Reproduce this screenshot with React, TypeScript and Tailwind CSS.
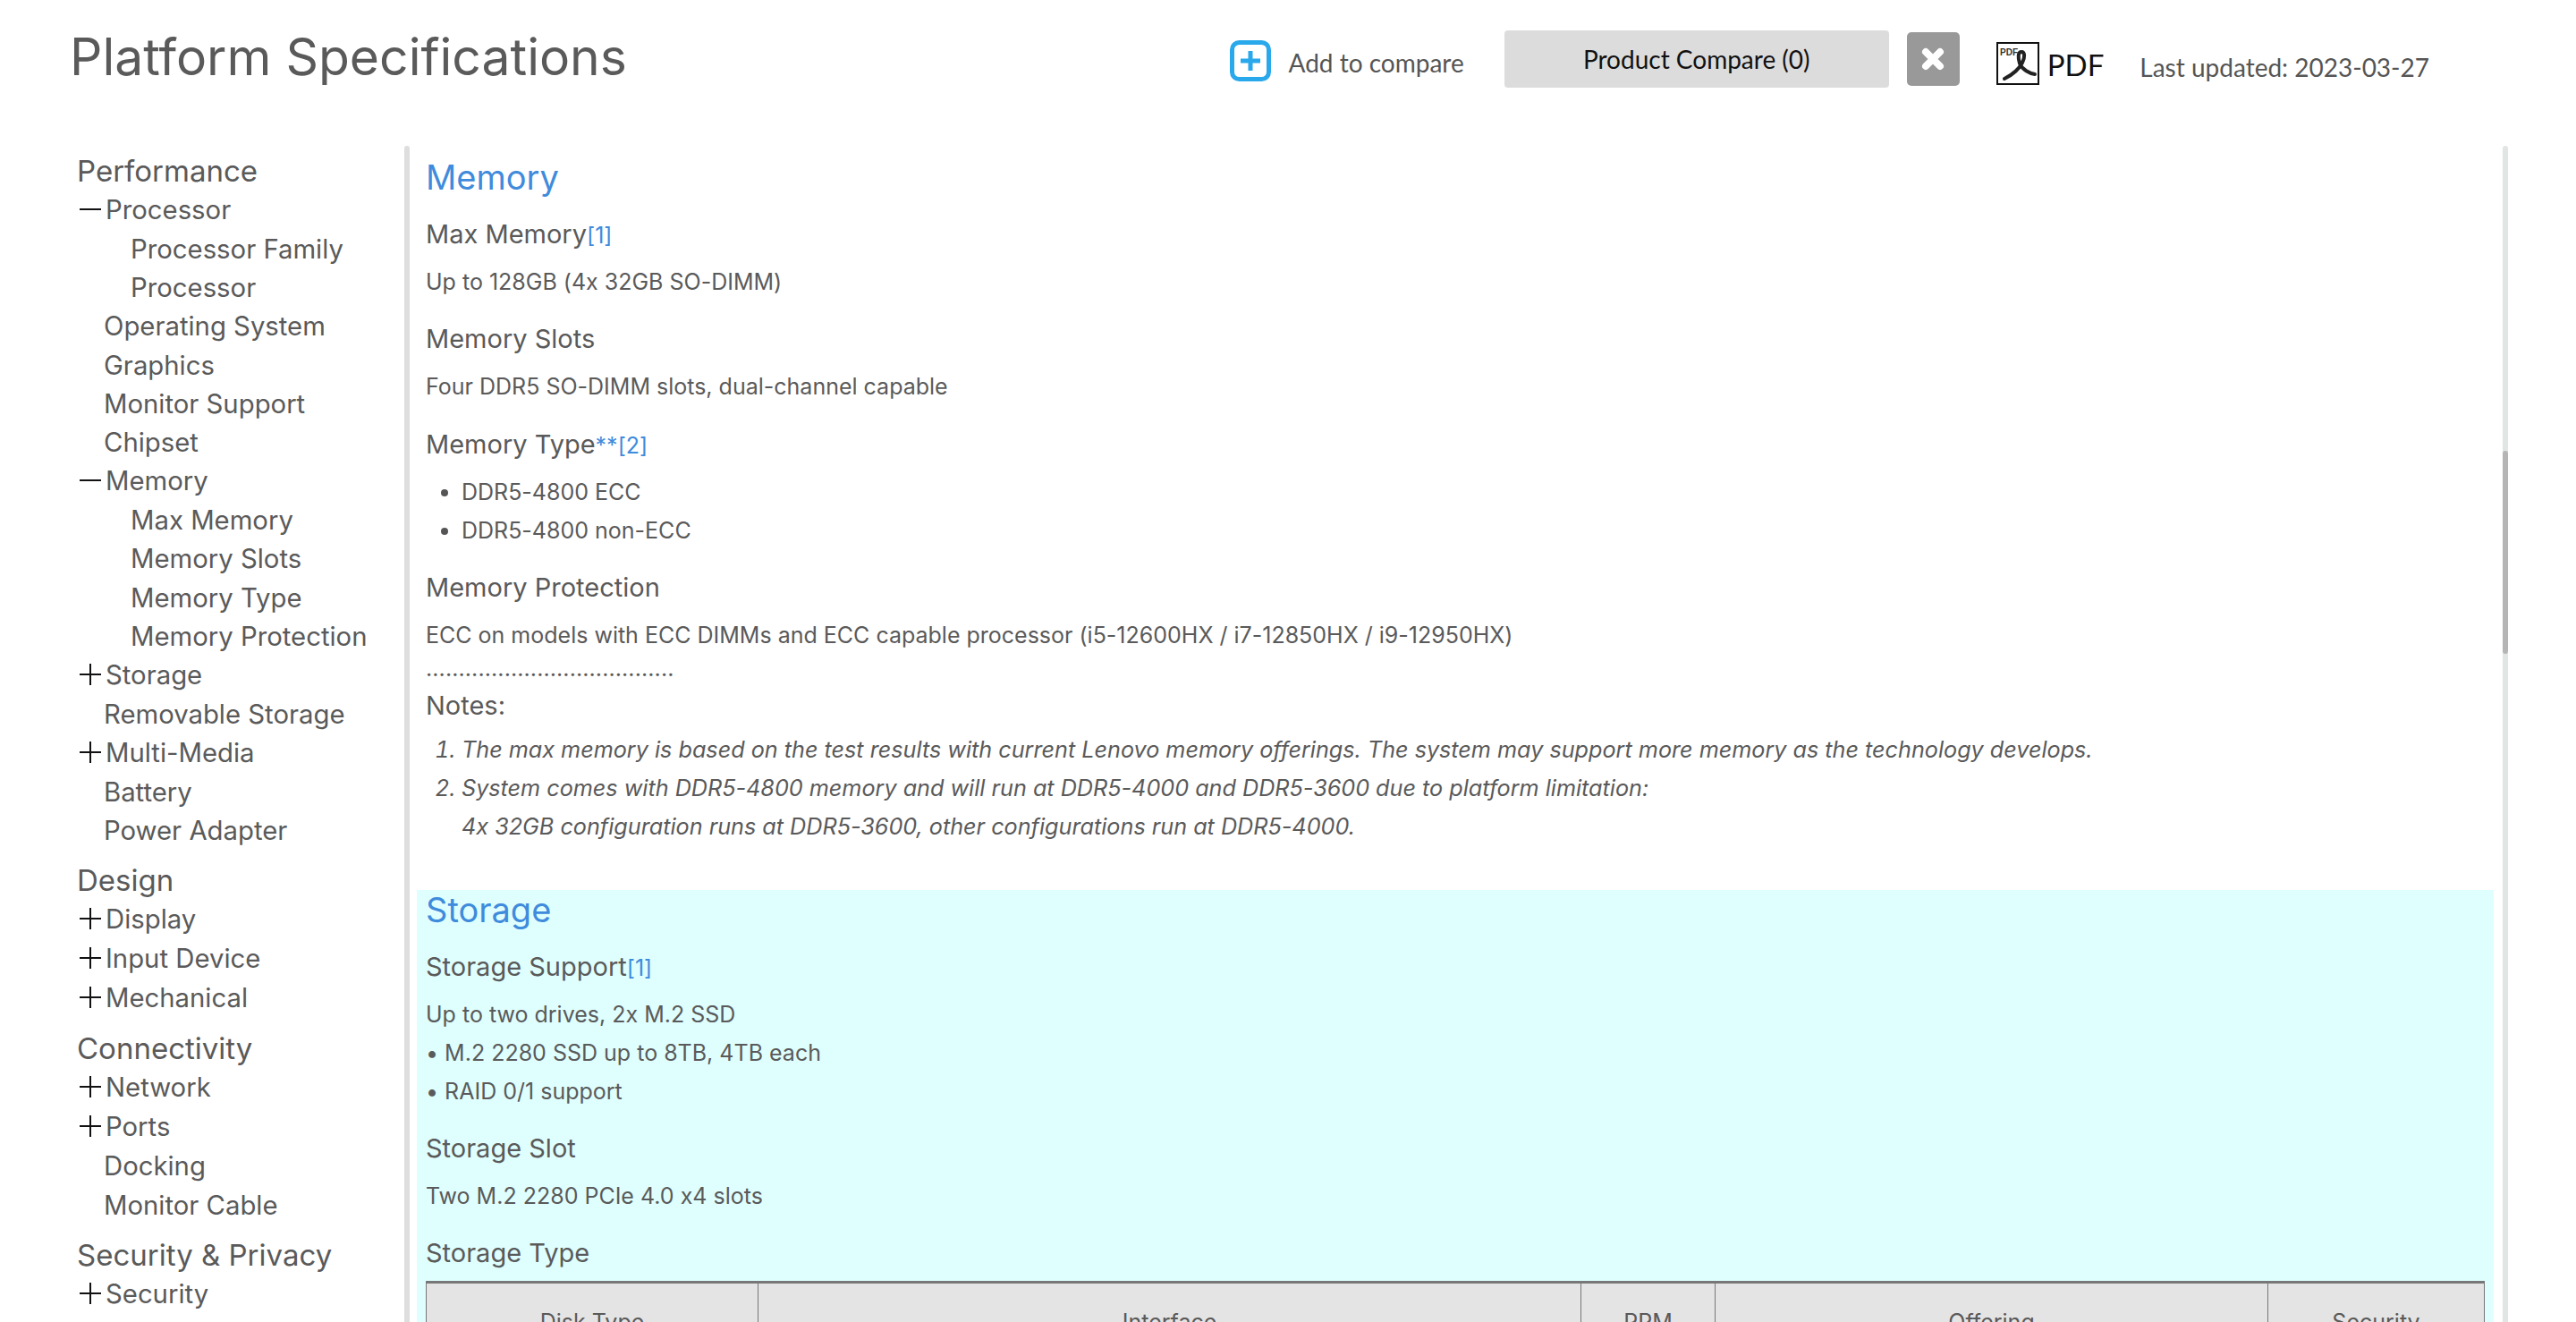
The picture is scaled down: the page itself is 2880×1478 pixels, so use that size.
type NavRow = { label: string; level: "cat" | "open" | "closed" | "plain" | "sub" };

const navRows: NavRow[] = [
  { label: "Performance", level: "cat" },
  { label: "Processor", level: "open" },
  { label: "Processor Family", level: "sub" },
  { label: "Processor", level: "sub" },
  { label: "Operating System", level: "plain" },
  { label: "Graphics", level: "plain" },
  { label: "Monitor Support", level: "plain" },
  { label: "Chipset", level: "plain" },
  { label: "Memory", level: "open" },
  { label: "Max Memory", level: "sub" },
  { label: "Memory Slots", level: "sub" },
  { label: "Memory Type", level: "sub" },
  { label: "Memory Protection", level: "sub" },
  { label: "Storage", level: "closed" },
  { label: "Removable Storage", level: "plain" },
  { label: "Multi-Media", level: "closed" },
  { label: "Battery", level: "plain" },
  { label: "Power Adapter", level: "plain" },
  { label: "Design", level: "cat" },
  { label: "Display", level: "closed" },
  { label: "Input Device", level: "closed" },
  { label: "Mechanical", level: "closed" },
  { label: "Connectivity", level: "cat" },
  { label: "Network", level: "closed" },
  { label: "Ports", level: "closed" },
  { label: "Docking", level: "plain" },
  { label: "Monitor Cable", level: "plain" },
  { label: "Security & Privacy", level: "cat" },
  { label: "Security", level: "closed" },
];

function Toggle({ open }: { open: boolean }) {
  return (
    <svg width="24" height="24" viewBox="0 0 24 24" className="mr-[5px] shrink-0 -translate-y-[1px]">
      <path d={open ? "M0 12H24" : "M0 12H24M12 0V24"} stroke="#111" strokeWidth="2" fill="none" />
    </svg>
  );
}

function Sidebar() {
  return (
    <aside className="w-[452px] shrink-0 pl-[86px] pt-[6px] text-[#5a5a5a]">
      {navRows.map((row, i) => {
        if (row.level === "cat") {
          return (
            <div key={i} className={`h-[44px] text-[33px] leading-[44px] ${i > 0 ? "mt-[12px]" : ""}`}>
              {row.label}
            </div>
          );
        }
        if (row.level === "sub") {
          return (
            <div key={i} className="h-[43.2px] pl-[60px] text-[29.3px] leading-[43px] whitespace-nowrap">
              {row.label}
            </div>
          );
        }
        if (row.level === "plain") {
          return (
            <div key={i} className="h-[43.2px] pl-[30px] text-[29.3px] leading-[43px] whitespace-nowrap">
              {row.label}
            </div>
          );
        }
        return (
          <div key={i} className="flex h-[44px] items-center pl-[3px] text-[29.3px] leading-[44px]">
            <Toggle open={row.level === "open"} />
            {row.label}
          </div>
        );
      })}
    </aside>
  );
}

function Ref({ text }: { text: string }) {
  return <span className="text-[25px] text-[#3f8bdc]">{text}</span>;
}

function Label({ children, tight }: { children: React.ReactNode; tight?: boolean }) {
  return (
    <div className={`h-[43px] text-[29px] leading-[43px] ${tight ? "mt-[20px]" : "mt-[20.5px]"}`}>{children}</div>
  );
}

function Para({ children }: { children: React.ReactNode }) {
  return <div className="mt-[11px] text-[25px] leading-[43px]">{children}</div>;
}

function SpecTable() {
  const heads = ["Disk Type", "Interface", "RPM", "Offering", "Security"];
  return (
    <table className="mt-[10px] w-full table-fixed border-collapse border-t-[3px] border-[#777] text-[25px]">
      <colgroup>
        <col className="w-[371px]" />
        <col className="w-[920px]" />
        <col className="w-[150px]" />
        <col className="w-[618px]" />
        <col />
      </colgroup>
      <thead>
        <tr>
          {heads.map((h) => (
            <th key={h} className="h-[90px] border border-[#777] bg-[#e5e4e4] font-normal">
              {h}
            </th>
          ))}
        </tr>
      </thead>
    </table>
  );
}

export default function App() {
  return (
    <div className="h-[1478px] overflow-hidden bg-white font-['Inter',sans-serif] text-[#5a5a5a] [font-feature-settings:'calt'_0]">
      <header className="flex h-[163px] items-start">
        <h1 className="ml-[78px] mt-[28px] text-[57px] font-normal leading-[72px] text-[#5a5a5a]">
          Platform Specifications
        </h1>
        <div className="ml-auto flex items-start font-['Lato',sans-serif]">
          <svg width="46" height="46" viewBox="0 0 46 46" className="mt-[45px]">
            <rect x="2.5" y="2.5" width="41" height="41" rx="8" fill="none" stroke="#29a8ec" strokeWidth="5" />
            <path d="M23 12V34M12 23H34" stroke="#29a8ec" strokeWidth="5" />
          </svg>
          <span className="ml-[20px] mt-[50px] text-[28px] leading-[40px] text-[#555]">Add to compare</span>
          <button className="ml-[45px] mt-[34px] h-[64px] w-[430px] rounded-[4px] bg-[#dcdcdc] text-[28px] text-[#111]">
            Product Compare (0)
          </button>
          <div className="ml-[20px] mt-[36px] flex h-[60px] w-[59px] items-center justify-center rounded-[5px] bg-[#999]">
            <svg width="26" height="26" viewBox="0 0 26 26">
              <path d="M5 5L21 21M21 5L5 21" stroke="#fff" strokeWidth="8" strokeLinecap="round" />
            </svg>
          </div>
          <svg width="48" height="48" viewBox="0 0 48 48" className="ml-[41px] mt-[47px]">
            <rect x="1" y="1" width="46" height="46" fill="#fff" stroke="#111" strokeWidth="2" />
            <text x="4" y="15" fontSize="10" fontWeight="700" fill="#333" fontFamily="Liberation Sans, sans-serif">PDF</text>
            <path d="M28 11C24 11 24 17 26 24C29 31 37 35 43 36M28 11C32 11 32 17 29 23C25 31 17 37 9 41" fill="none" stroke="#222" strokeWidth="4" strokeLinecap="round" />
          </svg>
          <span className="ml-[9px] mt-[50px] text-[33px] leading-[44px] text-[#111]">PDF</span>
          <span className="ml-[40px] mr-[164px] mt-[55px] text-[28px] leading-[40px] text-[#555]">Last updated: 2023-03-27</span>
        </div>
      </header>
      <div className="flex">
        <Sidebar />
        <main className="relative flex min-w-0 flex-1 pr-[76px]">
          <div className="h-[1315px] w-[6px] shrink-0 rounded-t-[3px] bg-[#dedede]" />
          <div className="min-w-0 flex-1 pl-[8px] pr-[16px] pt-[10px]">
            <section className="px-[10px] pb-[49px]">
              <h2 className="h-[46px] text-[38px] leading-[50px] text-[#3f8bdc]">Memory</h2>
              <Label>Max Memory<Ref text="[1]" /></Label>
              <Para>Up to 128GB (4x 32GB SO-DIMM)</Para>
              <Label>Memory Slots</Label>
              <Para>Four DDR5 SO-DIMM slots, dual-channel capable</Para>
              <Label>Memory Type<Ref text="**[2]" /></Label>
              <ul className="mt-[11px] list-disc pl-[40px] text-[25px] leading-[43px] marker:text-[#555]">
                <li>DDR5-4800 ECC</li>
                <li>DDR5-4800 non-ECC</li>
              </ul>
              <Label>Memory Protection</Label>
              <Para>ECC on models with ECC DIMMs and ECC capable processor (i5-12600HX / i7-12850HX / i9-12950HX)</Para>
              <div className="h-[35px] text-[25px] leading-[30px] tracking-[0.1px]">......................................</div>
              <div className="h-[43px] text-[29px] leading-[43px]">Notes:</div>
              <ol className="mt-[7px] list-decimal pl-[40px] text-[25.2px] italic leading-[43px]">
                <li>The max memory is based on the test results with current Lenovo memory offerings. The system may support more memory as the technology develops.</li>
                <li>
                  System comes with DDR5-4800 memory and will run at DDR5-4000 and DDR5-3600 due to platform limitation:
                  <br />
                  4x 32GB configuration runs at DDR5-3600, other configurations run at DDR5-4000.
                </li>
              </ol>
            </section>
            <section className="bg-[#dfffff] px-[10px]">
              <h2 className="h-[44px] text-[38px] leading-[44px] text-[#3f8bdc]">Storage</h2>
              <Label tight>Storage Support<Ref text="[1]" /></Label>
              <Para>
                Up to two drives, 2x M.2 SSD
                <br />• M.2 2280 SSD up to 8TB, 4TB each
                <br />• RAID 0/1 support
              </Para>
              <Label tight>Storage Slot</Label>
              <Para>Two M.2 2280 PCIe 4.0 x4 slots</Para>
              <Label tight>Storage Type</Label>
              <SpecTable />
            </section>
          </div>
          <div className="absolute right-[76px] top-0 h-[1315px] w-[6px] rounded-t-[3px] bg-[#e1e6e4]">
            <div className="absolute left-0 top-[341px] h-[227px] w-[6px] rounded-[3px] bg-[#b5b5b5]" />
          </div>
        </main>
      </div>
    </div>
  );
}
